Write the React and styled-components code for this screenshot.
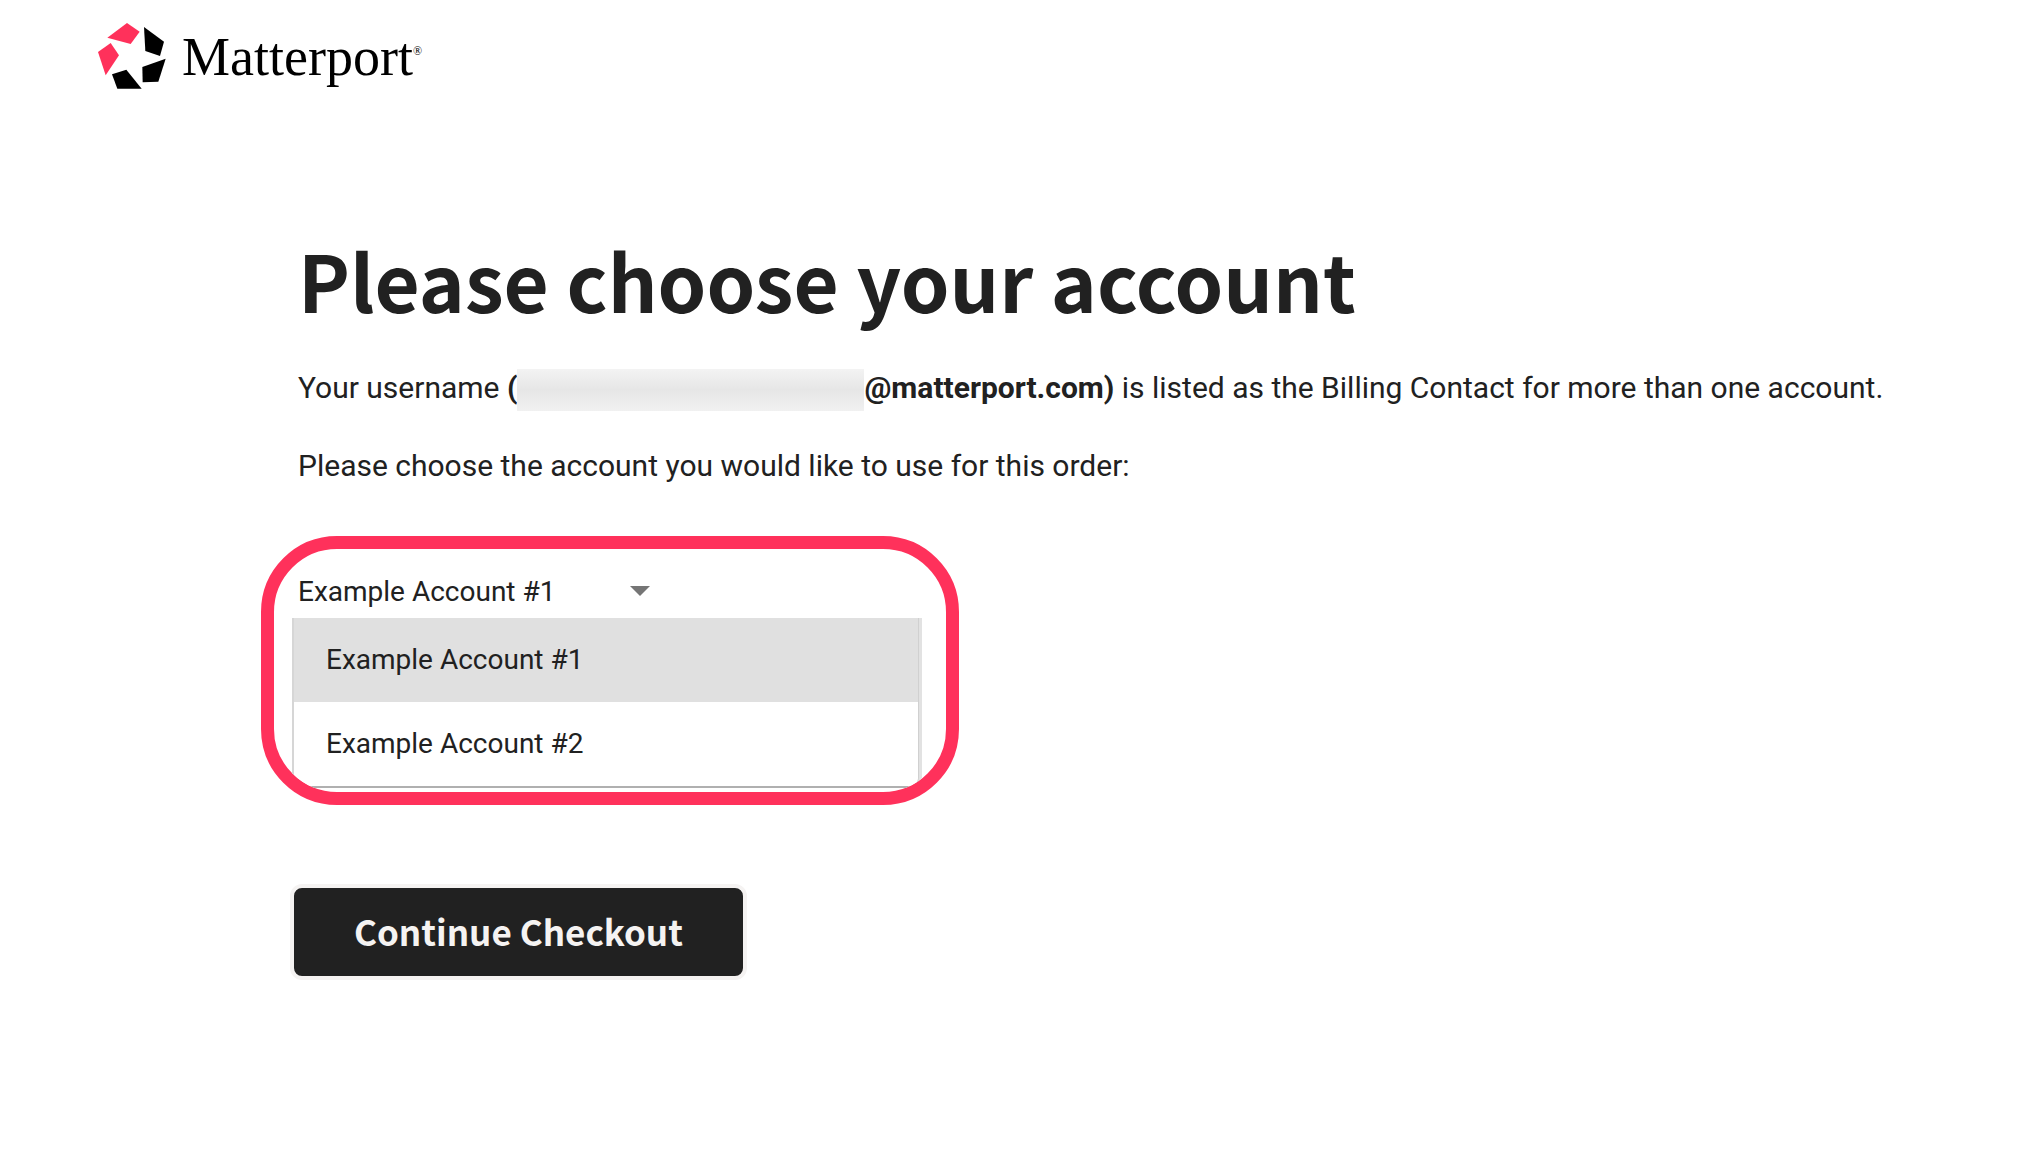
import { useState } from 'react';
import styled, { createGlobalStyle } from 'styled-components';

const accounts = ['Example Account #1', 'Example Account #2'];

const GlobalStyle = createGlobalStyle`
  *, *::before, *::after {
    box-sizing: border-box;
  }
  body {
    margin: 0;
    background: #fff;
    color: #212121;
    font-family: Roboto, sans-serif;
    font-size: 28px;
  }
`;

const Header = styled.header`
  display: flex;
  padding: 22px 98px 0;
`;

const LogoLink = styled.a`
  display: flex;
  align-items: center;
  gap: 16px;
  color: #000;
  text-decoration: none;
`;

const LogoMark = styled.svg`
  width: 68px;
  height: 66px;
`;

const LogoName = styled.span`
  padding-top: 2px;
  font-family: 'Liberation Serif', serif;
  font-size: 54px;
  line-height: 66px;
`;

const Registered = styled.sup`
  font-size: 12px;
  line-height: 12px;
  vertical-align: 20px;
`;

const Main = styled.main`
  padding: 135px 100px 80px 261px;
`;

const Intro = styled.section`
  display: flex;
  flex-direction: column;
  gap: 34px;
  padding-left: 37px;
`;

const Title = styled.h1`
  margin: 0;
  font-family: 'Noto Sans CJK JP', sans-serif;
  font-size: 78px;
  font-weight: 700;
  line-height: 108px;
`;

const Text = styled.p`
  margin: 0;
  font-size: 30px;
  line-height: 42px;
`;

const Redacted = styled.span`
  display: inline-block;
  width: 347px;
  height: 42px;
  vertical-align: middle;
  background: linear-gradient(#f3f3f3, #e6e6e6 50%, #f1f1f1);
`;

const Frame = styled.div`
  width: 100%;
  max-width: 698px;
  margin-top: 49px;
  padding: 15px 28px 6px 20px;
  border: 13px solid #ff315b;
  border-radius: 76px;
  overflow: hidden;
`;

const SelectField = styled.div`
  display: flex;
  align-items: center;
  position: relative;
  width: 360px;
  height: 54px;
  padding-left: 4px;
`;

const Select = styled.select`
  flex: 1;
  height: 54px;
  padding: 0;
  border: none;
  outline: none;
  appearance: none;
  background: transparent;
  color: inherit;
  font: inherit;
  cursor: pointer;
`;

const Arrow = styled.svg`
  position: absolute;
  right: 4px;
  width: 20px;
  height: 10px;
  fill: #757575;
  pointer-events: none;
`;

const Options = styled.ul`
  margin: 0;
  padding: 0;
  list-style: none;
  border-radius: 0 0 8px 8px;
  box-shadow: -2px 0 #d6d6d6, 0 2px #b0b0b0, 1px 0 #d0d0d0, 4px 0 #e2e2e2;
`;

const Option = styled.li`
  height: 84px;
  padding-left: 32px;
  line-height: 84px;
  background: ${props => props.$selected ? '#e0e0e0' : '#fff'};
  border-radius: ${props => props.$selected ? '0' : '0 0 8px 8px'};
  cursor: pointer;
`;

const Actions = styled.div`
  margin-top: 79px;
  padding-left: 29px;
`;

const Button = styled.button`
  height: 96px;
  padding: 0 60px 4px;
  border: 4px solid #f5f3f2;
  border-radius: 12px;
  background: #212121;
  color: #f5f3f2;
  font-family: 'Noto Sans CJK JP', sans-serif;
  font-size: 35px;
  font-weight: 700;
  cursor: pointer;
`;

const Logo = () => (
  <LogoLink href="#">
    <LogoMark viewBox="24 24 204 198" aria-hidden="true">
      <g fill="#ff315b">
        <polygon points="52,68 111,24 149,50 122,87" />
        <polygon points="24,111 62,84 87,121 47,181" />
      </g>
      <g fill="#000">
        <polygon points="162,36 222,80 210,123 166,108" />
        <polygon points="227,131 205,200 158,202 157,156" />
        <polygon points="66,178 109,164 155,221 82,221" />
      </g>
    </LogoMark>
    <LogoName>Matterport<Registered>®</Registered></LogoName>
  </LogoLink>
);

const AccountPicker = () => {
  const [account, setAccount] = useState(accounts[0]);

  return (
    <Frame>
      <SelectField>
        <Select
          aria-labelledby="account-label"
          value={account}
          onChange={e => setAccount(e.target.value)}
        >
          {accounts.map(name => <option key={name}>{name}</option>)}
        </Select>
        <Arrow viewBox="0 0 20 10" aria-hidden="true">
          <path d="M0 0h20L10 10z" />
        </Arrow>
      </SelectField>
      <Options role="listbox" aria-labelledby="account-label">
        {accounts.map(name => (
          <Option
            key={name}
            role="option"
            aria-selected={name === account}
            $selected={name === account}
            onClick={() => setAccount(name)}
          >
            {name}
          </Option>
        ))}
      </Options>
    </Frame>
  );
};

const App = () => (
  <>
    <GlobalStyle />
    <Header>
      <Logo />
    </Header>
    <Main>
      <Intro>
        <Title>Please choose your account</Title>
        <Text>
          Your username <b>(<Redacted />@matterport.com)</b> is listed as the Billing Contact for more than one account.
        </Text>
        <Text id="account-label">Please choose the account you would like to use for this order:</Text>
      </Intro>
      <AccountPicker />
      <Actions>
        <Button type="button">Continue Checkout</Button>
      </Actions>
    </Main>
  </>
);

export default App;
